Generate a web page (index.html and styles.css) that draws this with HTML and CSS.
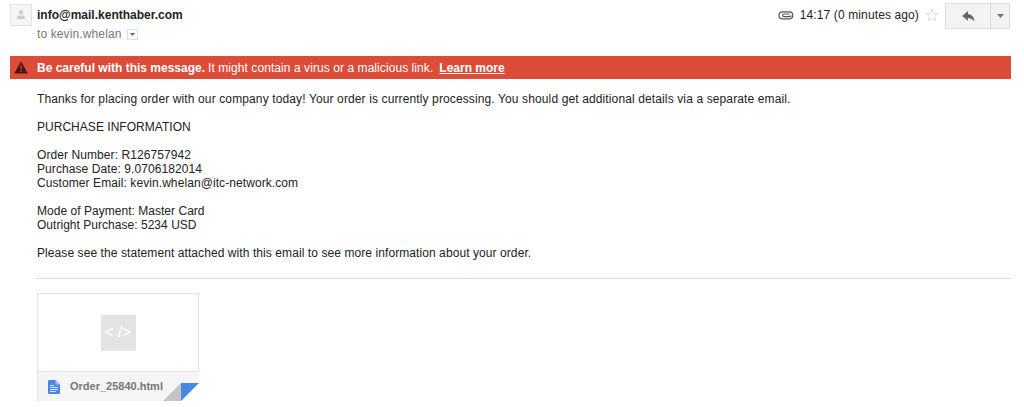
FILE: index.html
```html
<!DOCTYPE html>
<html lang="en">
    <head>
        <meta charset="utf-8">
        <title>Mail message</title>
        <link rel="stylesheet" href="styles.css">
    </head>
    <body>
        <div class="message">
            <!-- Sender and actions -->
            <div class="header">
                <div class="avatar">
                    <svg width="10" height="10" viewBox="0 0 10 10"><circle cx="5" cy="2.4" r="2.1"/><path d="M1 9V7.2Q1 5.4 3.5 5.4H6.5Q9 5.4 9 7.2V9Z"/></svg>
                </div>
                <div class="sender">
                    <div class="from"><span>info@mail.kenthaber.com</span></div>
                    <div class="to">
                        <span class="recipient">to kevin.whelan</span>
                        <button class="details"><svg width="5" height="3" viewBox="0 0 5 3"><path d="M0 0H5L2.5 3Z"/></svg></button>
                    </div>
                </div>
                <div class="actions">
                    <svg class="clip" width="16" height="9" viewBox="0 0 16 9"><path d="M11.5 3H6.2Q4.6 3 4.6 4.3T6.2 5.6H11Q12.6 5.6 13.4 4.6M11.5 7.9H4.8Q1 7.9 1 4.4T4.8 .9H11.2Q14.8 .9 14.8 4.2T11.5 7.9"/></svg>
                    <span class="time">14:17 (0 minutes ago)</span>
                    <svg class="star" width="14" height="14" viewBox="0 0 14 14"><path d="M7 .9L8.5 5.3H13.2L9.5 8.1L10.9 12.8L7 10L3.1 12.8L4.5 8.1L.8 5.3H5.5Z"/></svg>
                    <div class="buttons">
                        <button class="reply"><svg width="13" height="11" viewBox="0 0 13 11"><path d="M.2 4.9L6 0V3Q11.8 3.8 12.7 10.4Q9.5 7 6 7V9.8Z"/></svg></button>
                        <button class="more"><svg width="7" height="4" viewBox="0 0 7 4"><path d="M0 0H7L3.5 4Z"/></svg></button>
                    </div>
                </div>
            </div>

            <!-- Warning bar -->
            <div class="warning">
                <svg width="14" height="13" viewBox="0 0 14 13"><path class="triangle" d="M7 .3L13.8 12.5H.2Z"/><path class="mark" d="M6.3 4.2H7.7L7.4 8.7H6.6ZM6.4 9.7H7.6V11H6.4Z"/></svg>
                <b>Be careful with this message.</b>
                <span class="reason">It might contain a virus or a malicious link.</span>
                <a href="#">Learn more</a>
            </div>

            <!-- Message text -->
            <div class="body">
                <p class="intro">Thanks for placing order with our company today! Your order is currently processing. You should get additional details via a separate email.</p>
                <p class="title">PURCHASE INFORMATION</p>
                <p>Order Number: R126757942<br>Purchase Date: 9.0706182014<br>Customer Email: kevin.whelan@itc-network.com</p>
                <p class="title">Mode of Payment: Master Card<br>Outright Purchase: 5234 USD</p>
                <p>Please see the statement attached with this email to see more information about your order.</p>
            </div>

            <!-- Attachment -->
            <div class="attachments">
                <div class="card">
                    <div class="preview"><span class="code">&lt; /&gt;</span></div>
                    <div class="file">
                        <svg class="doc" width="12" height="14" viewBox="0 0 12 14"><path class="page" d="M1 0H7.5L12 4.5V13Q12 14 11 14H1Q0 14 0 13V1Q0 0 1 0Z"/><path class="fold" d="M7.5 .5V4.5H11.5Z"/><path class="lines" d="M2 5.5H6M2 7.5H10M2 9.5H10M2 11.5H8"/></svg>
                        <span class="name">Order_25840.html</span>
                        <svg class="corner" width="36" height="18" viewBox="0 0 36 18"><path class="shade" d="M0 18L18 0V18Z"/><path class="cut" d="M18 18L36 0V18Z"/><path class="flap" d="M18 0H36L18 18Z"/></svg>
                    </div>
                </div>
            </div>
        </div>
    </body>
</html>
```
FILE: styles.css
```css
body{
    margin: 0;
    background-color: #fff;
    font-family: "Liberation Sans", Arial, sans-serif;
    font-size: 12px;
    line-height: 14px;
    color: #222;
}
svg{
    display: block;
    flex: none;
}
button{
    display: flex;
    align-items: center;
    justify-content: center;
    box-sizing: border-box;
    padding: 0;
    border: 1px solid #dcdcdc;
    background-color: #f3f3f3;
}
.message{
    padding: 3px 13px 0 10px;
}
.header{
    display: flex;
    height: 53px;
}
.avatar{
    display: flex;
    align-items: center;
    justify-content: center;
    box-sizing: border-box;
    width: 22px;
    height: 22px;
    margin-top: 1px;
    border: 1px solid #e2e2e2;
    background-color: #f5f5f5;
    fill: #ccc;
}
.sender{
    margin-left: 5px;
    padding-top: 5px;
}
.from{
    font-weight: bold;
}
.to{
    display: flex;
    align-items: center;
    margin-top: 5px;
    color: #777;
    letter-spacing: 0.12px;
}
.details{
    width: 11px;
    height: 11px;
    margin-left: 5px;
    border-color: #ddd;
    background-color: #fff;
    fill: #666;
}
.actions{
    display: flex;
    align-items: center;
    height: 26px;
    margin-left: auto;
}
.clip{
    margin: -1px 6px 0 0;
    fill: none;
    stroke: #555;
    stroke-width: 1.2;
}
.time{
    margin-top: -2px;
    letter-spacing: 0.12px;
}
.star{
    margin: -2px 6px 0;
    fill: #fff;
    stroke: #dcdcdc;
}
.buttons{
    display: flex;
    margin-right: 1px;
}
.reply{
    width: 46px;
    height: 26px;
    fill: #666;
}
.more{
    width: 20px;
    height: 26px;
    margin-left: -1px;
    fill: #777;
}
.warning{
    display: flex;
    align-items: center;
    height: 23px;
    padding-left: 4px;
    background-color: #dd4b39;
    color: #fff;
}
.warning b{
    margin-left: 9px;
}
.triangle{
    fill: #4a1813;
}
.mark{
    fill: #dd4b39;
}
.reason{
    margin-left: 3px;
    letter-spacing: 0.07px;
}
.warning a{
    margin-left: 6px;
    color: #fff;
    font-weight: bold;
}
.body{
    padding: 13px 0 18px;
    margin-left: 27px;
    border-bottom: 1px dotted #ccc;
    letter-spacing: 0.08px;
}
.body p{
    margin: 0 0 14px;
}
.body p:last-child{
    margin-bottom: 0;
}
.body .intro{
    letter-spacing: 0.122px;
}
.body .title{
    letter-spacing: 0.03px;
}
.attachments{
    margin: 14px 0 0 27px;
}
.card{
    box-sizing: border-box;
    width: 162px;
    height: 108px;
    border: 1px solid #e3e3e3;
    border-bottom: none;
}
.preview{
    display: flex;
    align-items: center;
    justify-content: center;
    height: 77px;
}
.code{
    width: 35px;
    height: 36px;
    background-color: #e3e3e3;
    color: #fff;
    font-size: 15px;
    line-height: 34px;
    letter-spacing: 0.4px;
    text-align: center;
    -webkit-text-stroke: 0.3px #fff;
}
.file{
    display: flex;
    box-sizing: border-box;
    height: 30px;
    margin-right: -1px;
    padding-left: 10px;
    border-top: 1px solid #e3e3e3;
    background-color: #f5f5f5;
}
.doc{
    margin-top: 8px;
}
.page{
    fill: #4a86e8;
}
.fold{
    fill: #a9c7f8;
}
.lines{
    stroke: #d5e3fb;
}
.name{
    margin: 7px 0 0 10px;
    color: #777;
    font-size: 11px;
    font-weight: bold;
}
.corner{
    align-self: flex-end;
    margin-left: auto;
}
.shade{
    fill: #c4c4c4;
}
.cut{
    fill: #fff;
}
.flap{
    fill: #4a86e8;
}
```
